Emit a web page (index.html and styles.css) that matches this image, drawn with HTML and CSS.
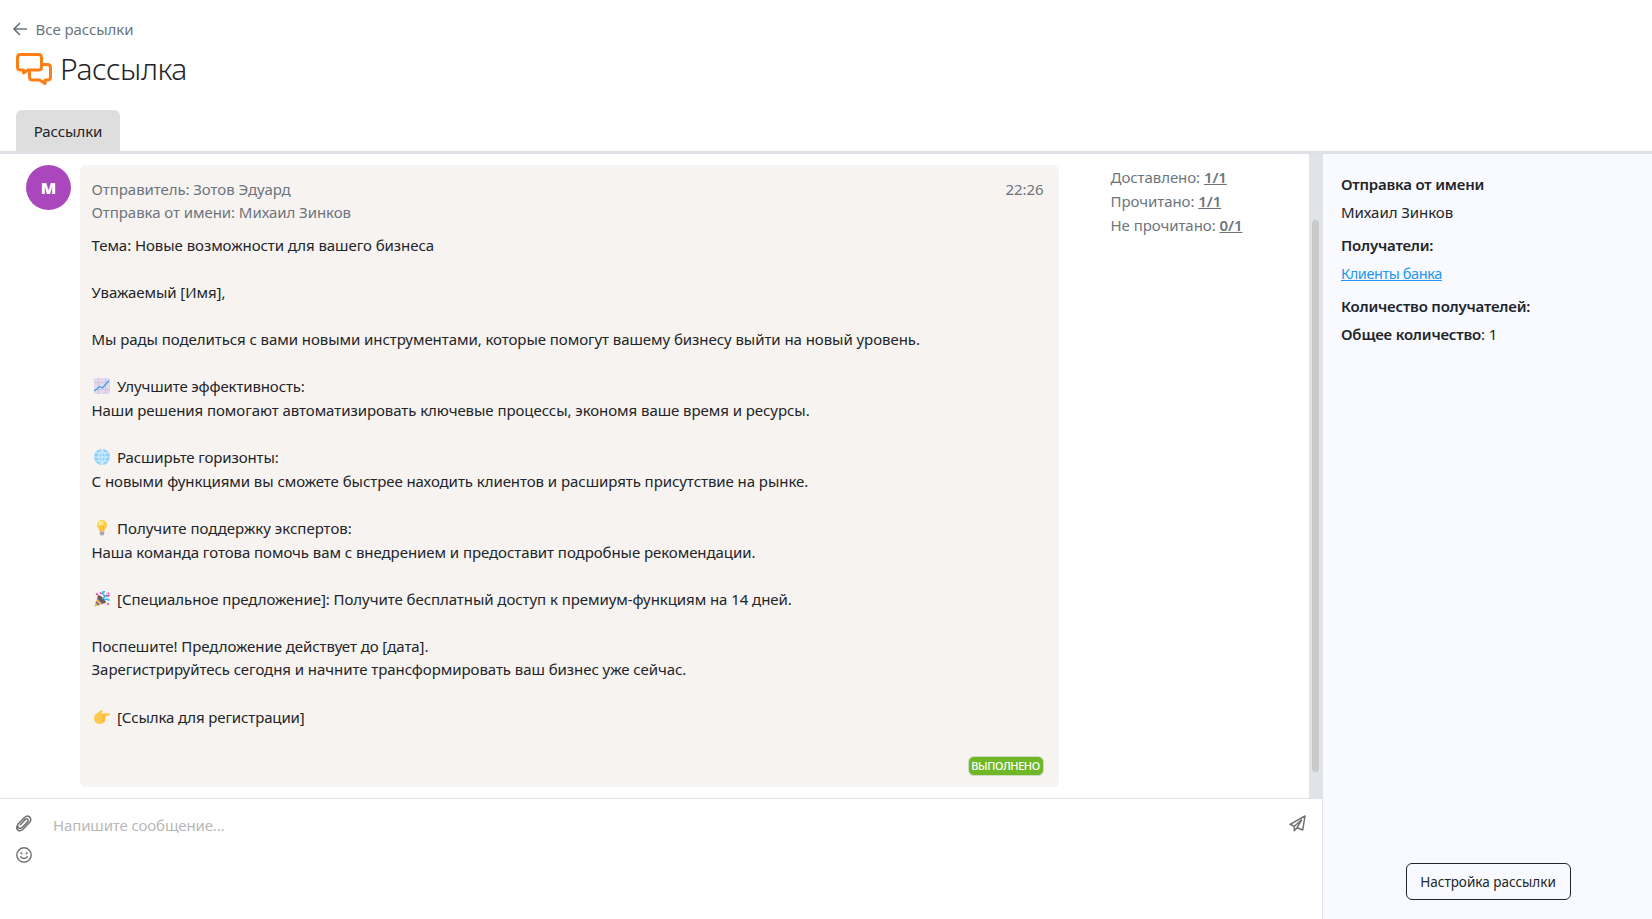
FILE: index.html
```html
<!DOCTYPE html>
<html lang="ru">
<head>
  <meta charset="UTF-8" />
  <meta name="viewport" content="width=device-width, initial-scale=1" />
  <title>Рассылка</title>
  <link rel="stylesheet" href="styles.css">
</head>
<body>
  <header class="header">
    <a class="back">
      <svg width="14" height="14" viewBox="0 0 14 14"><path d="M14 7H1M7 1L1 7l6 6" fill="none" stroke="#6c757d" stroke-width="1.7"/></svg>
      <span>Все рассылки</span>
    </a>
    <div class="title">
      <svg width="36" height="33" viewBox="0 0 36 33" fill="none" stroke="#fd7e14" stroke-width="3" stroke-linejoin="round">
        <path d="M4.500 1.500H22.500Q25.500 1.500 25.500 4.500V14Q25.500 17 22.500 17H12L7.500 20V17H4.500Q1.500 17 1.500 14V4.500Q1.500 1.500 4.500 1.500Z"/>
        <path d="M25.500 11.500H31.500Q34.500 11.500 34.500 14.500V24Q34.500 27 31.500 27H29V30.500L23.500 27H16.500Q13.500 27 13.500 24V17"/>
      </svg>
      <h1>Рассылка</h1>
    </div>
    <nav class="tabs">
      <a class="tab">Рассылки</a>
    </nav>
  </header>

  <main class="main">
    <section class="chat">
      <div class="feed">
        <div class="messages">
          <div class="avatar">М</div>
          <article class="bubble">
            <div class="meta">
              <div>
                <div>Отправитель: Зотов Эдуард</div>
                <div>Отправка от имени: Михаил Зинков</div>
              </div>
              <time>22:26</time>
            </div>
            <div class="text">
              <p>Тема: Новые возможности для вашего бизнеса</p>
              <br>
              <p>Уважаемый [Имя],</p>
              <br>
              <p>Мы рады поделиться с вами новыми инструментами, которые помогут вашему бизнесу выйти на новый уровень.</p>
              <br>
              <p class="tight">
                <svg class="emoji" viewBox="0 0 16 16">
                  <rect width="16" height="16" rx="2" fill="#e2d9ec"/>
                  <path d="M0 4.500H16M0 11.500H16M4.500 0V16M11.500 0V16" stroke="#cbbfd6" stroke-width=".8"/>
                  <path d="M.5 13L5.500 8.500 8.500 10 15 2.500" fill="none" stroke="#3ea2ee" stroke-width="1.300"/>
                </svg>Улучшите эффективность:</p>
              <p>Наши решения помогают автоматизировать ключевые процессы, экономя ваше время и ресурсы.</p>
              <br>
              <p class="tight">
                <svg class="emoji" viewBox="0 0 16 16">
                  <circle cx="8" cy="8" r="8" fill="#8fd0fb"/>
                  <path d="M8 0V16M0 8H16M1.500 4H14.500M1.500 12H14.500M8 .3Q1 8 8 15.700Q15 8 8 .3" fill="none" stroke="#e1f2fd" stroke-width=".9"/>
                </svg>Расширьте горизонты:</p>
              <p>С новыми функциями вы сможете быстрее находить клиентов и расширять присутствие на рынке.</p>
              <br>
              <p class="loose">
                <svg class="emoji" viewBox="0 0 16 16">
                  <path d="M8 0a5 5 0 0 1 5 5c0 3-2.300 3.500-2.500 6.500h-5C5.300 8.500 3 8 3 5a5 5 0 0 1 5-5z" fill="#fdcf46"/>
                  <circle cx="7" cy="3.500" r="2.500" fill="#ffe988"/>
                  <path d="M7 11L6.500 6h3L9 11" fill="none" stroke="#f3ac38" stroke-width=".8"/>
                  <path d="M5.800 11.500h4.400v2.500q-.4 1.500-2.200 1.500t-2.200-1.500z" fill="#a7a4ac"/>
                </svg>Получите поддержку экспертов:</p>
              <p>Наша команда готова помочь вам с внедрением и предоставит подробные рекомендации.</p>
              <br>
              <p>
                <svg class="emoji" viewBox="0 0 16 16">
                  <path d="M4 4.500L11.500 12 .3 15.800z" fill="#f4b23e"/>
                  <path d="M3.400 7L9 12.700M2 11L5 14" stroke="#5b64b8" stroke-width="1.500"/>
                  <ellipse cx="7.700" cy="8.300" rx="2" ry="5.200" transform="rotate(-45 7.700 8.300)" fill="#78504e"/>
                  <path d="M8 8Q12 6.500 9.500 3.500T11 .8M10 9.500Q12 7 15.500 9.500" fill="none" stroke="#2fb4ef" stroke-width="1.600"/>
                  <path d="M2 2.500L4 4M6 1.500L7.500 3M13 5.500L15.500 4M13 12.500L15 13.500" stroke="#e851a8" stroke-width="1.700"/>
                  <path d="M13.500 1.500h1.700v1.700h-1.700z" fill="#e851a8"/>
                  <path d="M11.500 5.500L13 4" stroke="#7656bd" stroke-width="1.400"/>
                </svg>[Специальное предложение]: Получите бесплатный доступ к премиум-функциям на 14 дней.</p>
              <br>
              <p>Поспешите! Предложение действует до [дата].</p>
              <p>Зарегистрируйтесь сегодня и начните трансформировать ваш бизнес уже сейчас.</p>
              <br>
              <p class="tight">
                <svg class="emoji" viewBox="0 0 16 16">
                  <path d="M0 8.500Q0 6 3 4.200L7 1.300Q8.700.7 8.700 2.200L7.600 4.300H14.800Q16 4.400 16 5.500T14.800 6.800H11.700Q12.500 8.200 11.300 9.100 12 10.500 10.800 11.300 11.400 12.600 10 13.300 9.700 14.700 8 14.700H4.500Q0 14.500 0 8.500z" fill="#fdc94e"/>
                  <path d="M11.500 6.800H8.500Q7.500 7 8 8.200M11 9.200H8.500M10.700 11.400H8.300" fill="none" stroke="#eda837" stroke-width=".8"/>
                </svg>[Ссылка для регистрации]</p>
            </div>
            <div class="status"><span class="badge">ВЫПОЛНЕНО</span></div>
          </article>
          <div class="stats">
            <div>Доставлено: <a>1/1</a></div>
            <div>Прочитано: <a>1/1</a></div>
            <div>Не прочитано: <a>0/1</a></div>
          </div>
        </div>
        <div class="scrollbar"><div class="thumb"></div></div>
      </div>
      <div class="composer">
        <div class="tools">
          <svg width="16" height="17" viewBox="0 0 16 17" fill="none" stroke="#6f6f6f" stroke-width="1.500" stroke-linecap="round">
            <path d="M4.300 9.800L9.300 4.400Q10.600 3.300 11.600 4.300T11.600 6.800L6.200 12.500Q4.200 14.200 2.500 12.600T2.300 8.700L8.800 2.200Q11.200-.2 13.500 1.900T13.900 7L7.200 14Q4.300 17 2 15.100T1.400 10.500"/>
          </svg>
          <svg width="16" height="16" viewBox="0 0 16 16" fill="none" stroke="#6f6f6f" stroke-width="1.400" stroke-linecap="round">
            <circle cx="8" cy="8" r="7.200"/>
            <path d="M4.700 9.800Q8 13.300 11.300 9.800"/>
            <circle cx="5.500" cy="6.300" r=".4"/><circle cx="10.500" cy="6.300" r=".4"/>
          </svg>
        </div>
        <div class="placeholder">Напишите сообщение...</div>
        <svg class="send" width="17" height="17" viewBox="0 0 17 17" fill="none" stroke="#6f6f6f" stroke-width="1.500" stroke-linejoin="round">
          <path d="M16 1L1 9.300 5.300 11.200V15.700L8 12.700 13.700 15zM5.300 11.200L12.500 5 8 12.700"/>
        </svg>
      </div>
    </section>

    <aside class="sidebar">
      <div class="info">
        <b>Отправка от имени</b>
        <span>Михаил Зинков</span>
        <b>Получатели:</b>
        <a>Клиенты банка</a>
        <b>Количество получателей:</b>
        <div><b>Общее количество</b>: 1</div>
      </div>
      <button class="settings">Настройка рассылки</button>
    </aside>
  </main>
</body>
</html>
```
FILE: styles.css
```css
* {
  box-sizing: border-box;
}
body {
  margin: 0;
  height: 100vh;
  display: flex;
  flex-direction: column;
  overflow: hidden;
  background: #fff;
  color: #212529;
  font-family: "Noto Sans", "Open Sans", sans-serif;
  font-size: 15px;
  line-height: 23.6px;
  letter-spacing: -0.06px;
}
svg {
  display: block;
  flex: none;
}
p, h1 {
  margin: 0;
}

/* header */
.header {
  height: 154px;
  flex: none;
  display: flex;
  flex-direction: column;
  border-bottom: 3px solid #dee2e6;
}
.back {
  display: flex;
  align-items: center;
  gap: 9px;
  padding: 18px 0 0 12.500px;
  color: #6c757d;
}
.back svg {
  margin-top: -2px;
}
.title {
  display: flex;
  align-items: center;
  gap: 8px;
  height: 42px;
  margin: 7px 0 0 16px;
}
.title h1 {
  margin-top: -2px;
  font-size: 30px;
  font-weight: 300;
  line-height: 42px;
  letter-spacing: -0.45px;
}
.tabs {
  margin: auto 0 0 16px;
  display: flex;
}
.tab {
  width: 104px;
  height: 41px;
  line-height: 43px;
  text-align: center;
  background: #dedede;
  border-radius: 6px 6px 0 0;
}

/* chat */
.main {
  flex: 1;
  min-height: 0;
  display: flex;
}
.chat {
  flex: 1;
  display: flex;
  flex-direction: column;
}
.feed {
  height: 644px;
  display: flex;
}
.messages {
  flex: 1;
  display: flex;
  align-items: flex-start;
  padding: 11px 0 0 26px;
}
.avatar {
  width: 45px;
  height: 45px;
  margin-right: 9px;
  border-radius: 50%;
  background: #ab47bc;
  color: #fff;
  font-family: "Open Sans", sans-serif;
  font-size: 16px;
  font-weight: 800;
  line-height: 46px;
  text-align: center;
}
.bubble {
  width: 979px;
  height: 622px;
  padding: 13px 15.500px 11px 11.500px;
  display: flex;
  flex-direction: column;
  border-radius: 6px;
  background: #f7f3f0;
}
.meta {
  display: flex;
  justify-content: space-between;
  color: #6c757d;
  line-height: 23px;
}
.text {
  margin-top: 9.800px;
  white-space: nowrap;
}
.text p {
  height: 23.6px;
}
.text .tight {
  letter-spacing: -0.13px;
}
.text .loose {
  letter-spacing: 0;
}
.emoji {
  display: inline-block;
  width: 16px;
  height: 16px;
  margin: 0 7px 0 2.500px;
  vertical-align: -2px;
}
.status {
  margin-top: auto;
  display: flex;
  justify-content: flex-end;
}
.badge {
  width: 76px;
  height: 20px;
  border: 1px solid #cfdcc4;
  border-radius: 6px;
  background: #70b728;
  color: #fff;
  font-size: 11px;
  font-weight: 500;
  line-height: 18px;
  letter-spacing: -0.4px;
  text-align: center;
}
.stats {
  margin: 0 0 0 51.500px;
  color: #6c757d;
  line-height: 24px;
}
.stats a {
  font-weight: 600;
  text-decoration: underline;
}
.scrollbar {
  width: 14px;
  padding: 66px 0 0 3px;
  background: #e1e3e9;
}
.thumb {
  width: 7px;
  height: 552px;
  border-radius: 4px;
  background: #c9c9c9;
}

/* composer */
.composer {
  flex: 1;
  display: flex;
  align-items: flex-start;
  padding: 16px 16px 0;
  border-top: 1px solid #dee2e6;
  border-right: 1px solid #dee2e6;
}
.tools {
  display: flex;
  flex-direction: column;
  gap: 15px;
}
.placeholder {
  flex: 1;
  margin: -1px 0 0 21px;
  color: #b8b8b8;
  letter-spacing: -0.13px;
}

/* right panel */
.sidebar {
  width: 329px;
  display: flex;
  flex-direction: column;
  align-items: center;
  justify-content: space-between;
  padding: 18px 17px 19px 18px;
  background: #f9faff;
}
.info {
  align-self: stretch;
  display: flex;
  flex-direction: column;
  align-items: flex-start;
  line-height: 24px;
}
.info > :nth-child(odd) {
  margin-bottom: 4px;
}
.info > :nth-child(even) {
  margin-bottom: 9px;
}
.info b {
  font-weight: 600;
  letter-spacing: -0.2px;
}
.info a {
  color: #2196f3;
  font-size: 14.500px;
  letter-spacing: -0.4px;
  text-decoration: underline;
}
.settings {
  width: 165px;
  height: 37px;
  padding: 0;
  border: 1px solid #212529;
  border-radius: 6px;
  background: transparent;
  color: #212529;
  font-family: inherit;
  font-size: 13.500px;
}
```
